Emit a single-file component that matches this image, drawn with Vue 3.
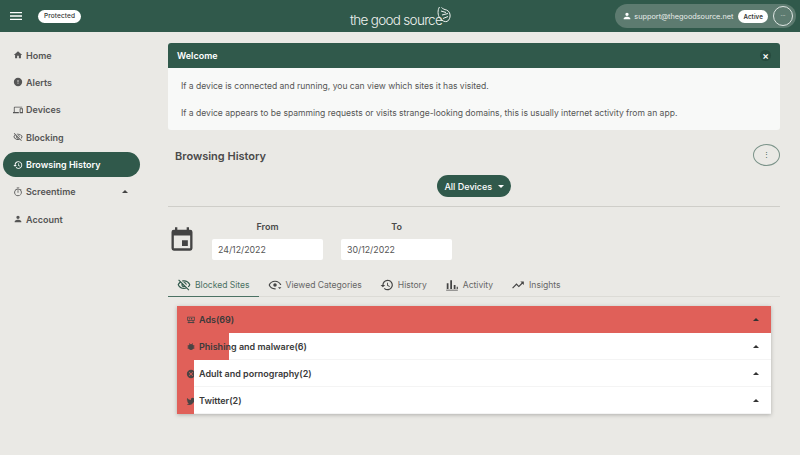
<template>
  <div class="page">
    <header class="topbar">
      <div class="top-left">
        <svg class="burger" viewBox="0 0 24 24" width="16" height="16"><path d="M3 18h18v-2H3v2zm0-5h18v-2H3v2zm0-7v2h18V6H3z" fill="#fff"/></svg>
        <span class="pill">Protected</span>
      </div>
      <div class="logo">
        <span>the good source</span>
        <svg class="leaf" viewBox="0 0 15 17" width="15" height="17" fill="none" stroke="#eef2ef" stroke-width="1">
          <path d="M3.500 1C1.500 4 1.500 9 4 12.500 6 15 9 16 11 15.500"/>
          <path d="M5.500 1.500C7 3 8.500 3.500 10.500 4 13.500 5 14.500 8.500 14 11 13.500 13.500 12 15 11 15.500"/>
          <path d="M5 5l5 1.500M6 9l6-1.500M7 12.500l5-2"/>
        </svg>
      </div>
      <div class="user">
        <svg viewBox="0 0 24 24" width="10" height="10"><path :d="icons.person" fill="#fff"/></svg>
        <span class="email">support@thegoodsource.net</span>
        <span class="pill active">Active</span>
        <span class="dots">···</span>
      </div>
    </header>

    <div class="body">
      <nav class="sidebar">
        <a v-for="item in nav" :key="item.label" class="nav-item" :class="{ on: item.on }">
          <svg viewBox="0 0 24 24" width="10" height="10"><path :d="icons[item.icon]" fill="currentColor"/></svg>
          <span class="nav-label">{{ item.label }}</span>
          <span v-if="item.caret" class="caret"></span>
        </a>
      </nav>

      <main class="main">
        <section class="welcome">
          <div class="welcome-head">
            <span>Welcome</span>
            <span class="close">×</span>
          </div>
          <div class="welcome-body">
            <p>If a device is connected and running, you can view which sites it has visited.</p>
            <p>If a device appears to be spamming requests or visits strange-looking domains, this is usually internet activity from an app.</p>
          </div>
        </section>

        <div class="title-row">
          <h2>Browsing History</h2>
          <span class="more">⋮</span>
        </div>

        <div class="device-row">
          <button class="device-btn">All Devices <span class="caret down"></span></button>
        </div>

        <div class="dates">
          <svg class="cal" viewBox="0 0 24 24" width="28" height="28"><path :d="icons.calendar" fill="#444"/></svg>
          <div class="date" v-for="d in dates" :key="d.label">
            <label>{{ d.label }}</label>
            <div class="date-input">{{ d.value }}</div>
          </div>
        </div>

        <div class="tabs">
          <a v-for="t in tabs" :key="t.label" class="tab" :class="{ on: t.on }">
            <svg viewBox="0 0 24 24" width="14" height="14"><path :d="icons[t.icon]" fill="currentColor"/></svg>
            {{ t.label }}
          </a>
        </div>

        <div class="accordion">
          <div v-for="r in rows" :key="r.label" class="row">
            <svg viewBox="0 0 24 24" width="10" height="10"><path :d="icons[r.icon]" fill="#4a4444"/></svg>
            <div class="row-fill" :style="{ left: r.white + 'px' }"></div>
            <span class="row-label">{{ r.label }}</span>
            <span class="caret dark"></span>
          </div>
        </div>
      </main>
    </div>
  </div>
</template>

<script setup>
const icons = {
  home: 'M10 20v-6h4v6h5v-8h3L12 3 2 12h3v8z',
  alert: 'M12 2a10 10 0 100 20 10 10 0 000-20zm1 15h-2v-2h2zm0-4h-2V7h2z',
  devices: 'M4 6h18V4H4a2 2 0 00-2 2v11H0v3h14v-3H4zm19 2h-6a1 1 0 00-1 1v10a1 1 0 001 1h6a1 1 0 001-1V9a1 1 0 00-1-1zm-1 9h-4v-7h4z',
  blocked: 'M12 6c3.790 0 7.170 2.130 8.820 5.500-.59 1.220-1.420 2.270-2.410 3.120l1.410 1.410c1.390-1.230 2.490-2.770 3.180-4.530C21.270 7.110 17 4 12 4c-1.270 0-2.490.2-3.640.57l1.650 1.650C10.660 6.090 11.320 6 12 6zm-1.070 1.140L13 9.210c.57.25 1.030.71 1.280 1.280l2.070 2.070c.08-.34.14-.7.14-1.070C16.500 9.010 14.480 7 12 7c-.37 0-.72.05-1.070.14zM2.010 3.870l2.680 2.680C3.060 7.830 1.770 9.530 1 11.500 2.730 15.890 7 19 12 19c1.520 0 2.980-.29 4.320-.82l3.420 3.420 1.410-1.410L3.420 2.450 2.010 3.870zm7.500 7.500l2.610 2.610c-.04.01-.08.02-.12.02-1.380 0-2.500-1.120-2.500-2.500 0-.05.01-.08.01-.13zm-3.400-3.400l1.750 1.750c-.23.55-.36 1.150-.36 1.780 0 2.480 2.020 4.500 4.500 4.500.63 0 1.230-.13 1.770-.36l.98.98c-.88.24-1.800.38-2.750.38-3.790 0-7.170-2.130-8.820-5.500.7-1.430 1.720-2.610 2.930-3.530z',
  history: 'M13 3a9 9 0 00-9 9H1l3.900 3.900.1.1L9 12H6a7 7 0 112.050 4.950l-1.420 1.420A9 9 0 1013 3zm-1 5v5l4.300 2.500.7-1.200-3.500-2.100V8z',
  timer: 'M15 1H9v2h6zm-4 13h2V8h-2zm8-6.600l1.400-1.400-1.400-1.400-1.400 1.400A9 9 0 1012 22a9 9 0 007-14.600zM12 20a7 7 0 110-14 7 7 0 010 14z',
  person: 'M12 12a4 4 0 100-8 4 4 0 000 8zm0 2c-2.700 0-8 1.300-8 4v2h16v-2c0-2.700-5.300-4-8-4z',
  calendar: 'M19 4h-1V2h-2v2H8V2H6v2H5a2 2 0 00-2 2v14a2 2 0 002 2h14a2 2 0 002-2V6a2 2 0 00-2-2zm0 16H5V9h14zM12 13h5v5h-5z',
  eye: 'M12 4.500C7 4.500 2.700 7.600 1 12c1.700 4.400 6 7.500 11 7.500h1v-2h-1A9.800 9.800 0 013.200 12 9.800 9.800 0 0112 6.500a9.800 9.800 0 018.800 5.500H23C21.300 7.600 17 4.500 12 4.500zM12 9a3 3 0 100 6 3 3 0 000-6zm5 7l3 3 3-3z',
  bars: 'M3 9h3v10H3zm6-5h3v15H9zm6 8h3v7h-3zm5 3h2v4h-2zM2 20h20v1.500H2z',
  trend: 'M16 6l2.300 2.300-4.900 4.900-4-4L2 16.600 3.400 18l6-6 4 4 6.300-6.300L22 12V6z',
  ads: 'M3 4h18v10H3zm2 2v6h14V6zM6 14h2v6H6zm10 0h2v6h-2zM4 17h16v2H4zM8 7h2v4H8zm4 0h3v4h-3z',
  bug: 'M20 8h-2.800a6 6 0 00-1.800-2l1.600-1.600L15.600 3l-2.200 2.200a6 6 0 00-2.800 0L8.400 3 7 4.400 8.600 6a6 6 0 00-1.800 2H4v2h2v1H4v2h2v1H4v2h2.800a6 6 0 0010.400 0H20v-2h-2v-1h2v-2h-2v-1h2z',
  cancel: 'M12 2a10 10 0 100 20 10 10 0 000-20zm5 13.600L15.600 17 12 13.400 8.400 17 7 15.600 10.600 12 7 8.400 8.400 7l3.600 3.600L15.600 7 17 8.400 13.400 12z',
  twitter: 'M22.500 6c-.8.3-1.600.6-2.500.7.9-.5 1.600-1.400 1.900-2.400-.8.5-1.800.9-2.800 1A4.400 4.400 0 0011.700 9.400 12.400 12.400 0 012.700 4.800a4.400 4.400 0 001.400 5.900c-.7 0-1.400-.2-2-.5 0 2.100 1.500 3.900 3.500 4.300-.6.2-1.300.2-2 .1.600 1.800 2.200 3 4.100 3A8.800 8.800 0 011 19.400 12.400 12.400 0 0020.200 8.300c.9-.6 1.700-1.400 2.300-2.300z'
}

const nav = [
  { label: 'Home', icon: 'home' },
  { label: 'Alerts', icon: 'alert' },
  { label: 'Devices', icon: 'devices' },
  { label: 'Blocking', icon: 'blocked' },
  { label: 'Browsing History', icon: 'history', on: true },
  { label: 'Screentime', icon: 'timer', caret: true },
  { label: 'Account', icon: 'person' }
]

const dates = [
  { label: 'From', value: '24/12/2022' },
  { label: 'To', value: '30/12/2022' }
]

const tabs = [
  { label: 'Blocked Sites', icon: 'blocked', on: true },
  { label: 'Viewed Categories', icon: 'eye' },
  { label: 'History', icon: 'history' },
  { label: 'Activity', icon: 'bars' },
  { label: 'Insights', icon: 'trend' }
]

const rows = [
  { label: 'Ads(69)', icon: 'ads', white: 594 },
  { label: 'Phishing and malware(6)', icon: 'bug', white: 52 },
  { label: 'Adult and pornography(2)', icon: 'cancel', white: 17 },
  { label: 'Twitter(2)', icon: 'twitter', white: 17 }
]
</script>

<style>
html, body { margin: 0; background: #eae9e5; }
</style>

<style scoped>
.page {
  width: 800px;
  height: 455px;
  overflow: hidden;
  background: #eae9e5;
  font-family: Inter, "Liberation Sans", sans-serif;
  color: #444;
}

.topbar {
  height: 32px;
  background: #30594b;
  display: grid;
  grid-template-columns: 1fr auto 1fr;
  align-items: center;
  padding: 0 4px 0 8px;
}
.top-left { display: flex; align-items: center; gap: 14px; }
.burger { display: block; }
.pill {
  background: #fff;
  color: #333;
  font-size: 6.5px;
  font-weight: 500;
  letter-spacing: 0.1px;
  line-height: 13px;
  padding: 0 6px;
  border-radius: 7px;
}
.logo {
  position: relative;
  color: #eef2ef;
  font-size: 13.500px;
  font-weight: 300;
  letter-spacing: -0.7px;
  padding-top: 7px;
  margin-left: -6px;
  margin-right: 6px;
}
.leaf { position: absolute; left: 86px; top: 1px; }
.user {
  justify-self: end;
  display: flex;
  align-items: center;
  background: #5d7b70;
  border-radius: 12px;
  height: 24px;
  padding: 0 3px 0 7px;
  color: #e8ecea;
}
.email { font-size: 7.300px; margin-left: 2px; }
.pill.active { font-size: 6.200px; font-weight: 600; margin-left: 5px; padding: 0 5px; line-height: 13px; }
.dots {
  width: 18px;
  height: 18px;
  margin-left: 5px;
  border: 1px solid #dfe6e3;
  border-radius: 50%;
  font-size: 6px;
  line-height: 18px;
  text-align: center;
}

.body { display: flex; }

.sidebar {
  width: 168px;
  flex-shrink: 0;
  padding-top: 10.500px;
  box-sizing: border-box;
}
.nav-item {
  display: flex;
  align-items: center;
  width: 137px;
  height: 25px;
  margin: 0 0 2.400px 3px;
  padding-left: 9.500px;
  box-sizing: border-box;
  border-radius: 13px;
  font-size: 9px;
  font-weight: 600;
  color: #555;
}
.nav-item.on { background: #30594b; color: #fff; }
.nav-label { margin-left: 3.500px; }
.caret {
  width: 0;
  height: 0;
  border-left: 3px solid transparent;
  border-right: 3px solid transparent;
  border-bottom: 3px solid #444;
  margin-left: auto;
  margin-right: 12px;
}

.main { width: 612px; padding-top: 11px; }

.welcome {
  border-radius: 3px;
  overflow: hidden;
  background: #f8f9f8;
}
.welcome-head {
  height: 25px;
  background: #30594b;
  color: #fff;
  font-size: 9px;
  font-weight: 600;
  display: flex;
  align-items: center;
  justify-content: space-between;
  padding: 0 9px;
}
.close {
  width: 11px;
  height: 11px;
  border-radius: 50%;
  background: #264a3e;
  font-size: 10px;
  line-height: 11px;
  text-align: center;
}
.welcome-body {
  height: 62px;
  padding: 13px 13px 0;
  box-sizing: border-box;
  font-size: 8.550px;
  color: #555;
}
.welcome-body p { margin: 0 0 16px; line-height: 11px; }

.title-row {
  display: flex;
  align-items: center;
  justify-content: space-between;
  margin-top: 14px;
  height: 22px;
}
.title-row h2 { margin: 2px 0 0 7px; font-size: 11px; font-weight: 600; color: #4a4a4a; }
.more {
  width: 27px;
  height: 22px;
  border: 1px solid #7b9389;
  border-radius: 50%;
  box-sizing: border-box;
  color: #30594b;
  font-size: 7px;
  line-height: 20px;
  text-align: center;
}

.device-row {
  display: flex;
  justify-content: center;
  margin-top: 9px;
  padding: 0 0 9px;
  border-bottom: 1px solid #cfcec9;
}
.device-btn {
  height: 22px;
  width: 74px;
  border: 0;
  padding: 0;
  border-radius: 11px;
  background: #30594b;
  color: #fff;
  font-family: inherit;
  font-size: 9px;
  font-weight: 500;
}
.caret.down {
  display: inline-block;
  border-bottom: 0;
  border-top: 3px solid #fff;
  margin: 0 0 1px 3px;
  vertical-align: middle;
}

.dates {
  display: flex;
  align-items: center;
  margin-top: 13px;
}
.cal { margin-top: -3px; }
.date { width: 111px; margin-right: 18px; text-align: center; }
.date:first-of-type { margin-left: 16px; }
.date label { display: block; font-size: 9px; font-weight: 600; line-height: 14px; margin-bottom: 5px; color: #4a4a4a; }
.date-input {
  height: 21px;
  background: #fff;
  border-radius: 2px;
  padding-left: 6px;
  font-size: 8.800px;
  line-height: 21px;
  text-align: left;
  color: #555;
}

.tabs {
  display: flex;
  margin-top: 13px;
  border-bottom: 1px solid #dcdbd6;
  height: 23px;
}
.tab {
  display: flex;
  align-items: center;
  gap: 4px;
  height: 24px;
  padding: 0 9px;
  box-sizing: border-box;
  font-size: 8.550px;
  color: #666;
}
.tab svg { color: #444; }
.tab.on { color: #4b7163; border-bottom: 1px solid #4b7163; }
.tab.on svg { color: #30594b; }

.accordion {
  width: 594px;
  margin: 9px 0 0 9px;
  background: #e06059;
  box-shadow: 0 1px 4px rgba(0, 0, 0, 0.25);
}
.row {
  position: relative;
  height: 27px;
  display: flex;
  align-items: center;
  padding-left: 9px;
  font-size: 9px;
  font-weight: 600;
  color: #3a3a3a;
}
.row-fill {
  position: absolute;
  top: 0;
  right: 0;
  bottom: 0;
  background: #fff;
  border-bottom: 1px solid #f4f4f4;
}
.row-label { position: relative; margin-left: 3px; }
.caret.dark { position: relative; margin-right: 12px; border-bottom-color: #333; }
</style>
